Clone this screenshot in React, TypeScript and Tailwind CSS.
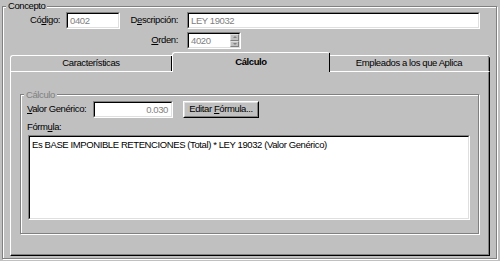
import type { ReactNode } from "react"

const etched = "border border-[#808080] shadow-[inset_1px_1px_0_#fff,1px_1px_0_#fff]"

function Sunken({ className = "", children }: { className?: string; children?: ReactNode }) {
  return (
    <div className={`border border-t-[#808080] border-l-[#808080] border-b-white border-r-white ${className}`}>
      <div className="relative h-full w-full border border-t-black border-l-black border-b-[#dfdfdf] border-r-[#dfdfdf] bg-white">
        {children}
      </div>
    </div>
  )
}

function Raised({ className = "", children }: { className?: string; children?: ReactNode }) {
  return (
    <div className={`border border-t-white border-l-white border-b-black border-r-black ${className}`}>
      <div className="flex h-full w-full items-center justify-center border border-t-[#dfdfdf] border-l-[#dfdfdf] border-b-[#808080] border-r-[#808080] bg-[#c0c0c0]">
        {children}
      </div>
    </div>
  )
}

function SpinButton({ up }: { up?: boolean }) {
  return (
    <div className="flex h-1/2 w-full items-center justify-center border border-t-[#dfdfdf] border-l-[#dfdfdf] border-b-[#808080] border-r-[#808080] bg-[#c0c0c0]">
      {up ? (
        <span className="block h-0 w-0 border-x-[2px] border-b-[2px] border-x-transparent border-b-[#808080]" />
      ) : (
        <span className="block h-0 w-0 border-x-[2px] border-t-[2px] border-x-transparent border-t-[#808080]" />
      )}
    </div>
  )
}

export default function App() {
  return (
    <div className="h-[261px] w-[500px] overflow-hidden whitespace-nowrap bg-[#c0c0c0] font-['Liberation_Sans',Arial,sans-serif] text-[9.5px] tracking-[-0.4px] text-black">
      {/* Concepto */}
      <fieldset className={`ml-[2px] h-[259px] w-[495px] ${etched}`}>
        <legend className="ml-[3px] bg-[#c0c0c0] px-[2px] leading-[12px]">Concepto</legend>

        <div className="flex h-[17px] items-center">
          <span className="w-[57px] text-right">Có<u>d</u>igo:</span>
          <Sunken className="ml-[6px] h-[17px] w-[54px]">
            <span className="pl-[2px] leading-[13px] text-[#808080]">0402</span>
          </Sunken>
          <span className="w-[58px] text-right">D<u>e</u>scripción:</span>
          <Sunken className="ml-[9px] h-[17px] w-[293px]">
            <span className="pl-[2px] leading-[13px] text-[#808080]">LEY 19032</span>
          </Sunken>
        </div>

        <div className="mt-[3px] flex h-[17px] items-center">
          <span className="w-[175px] text-right"><u>O</u>rden:</span>
          <Sunken className="ml-[9px] h-[17px] w-[54px]">
            <span className="pl-[2px] leading-[13px] text-[#808080]">4020</span>
            <div className="absolute right-0 top-0 flex h-full w-[9px] flex-col">
              <SpinButton up />
              <SpinButton />
            </div>
          </Sunken>
        </div>

        {/* Tabs */}
        <div className="ml-[7px] mt-[3px] flex h-[19px] items-end">
          <div className="flex h-[16px] w-[162px] items-center justify-center rounded-tl-[3px] border-l border-t border-white">
            <div className="flex h-full w-full items-center justify-center border-r border-black">Características</div>
          </div>
          <div className="relative z-10 -mb-[1px] flex h-[20px] w-[158px] items-center justify-center rounded-t-[3px] border-l border-t border-white bg-[#c0c0c0]">
            <div className="flex h-full w-full items-center justify-center border-r border-black font-bold">Cálculo</div>
          </div>
          <div className="flex h-[16px] w-[160px] rounded-tr-[3px] border-t border-white">
            <div className="flex h-full w-full items-center justify-center rounded-tr-[3px] border-r border-black">
              <div className="flex h-full w-full items-center justify-center border-r border-[#808080]">Empleados a los que Aplica</div>
            </div>
          </div>
        </div>

        {/* Panel */}
        <div className="ml-[7px] h-[185px] w-[480px] border border-t-white border-l-white border-b-black border-r-black">
          <div className="h-full w-full border-b border-r border-[#808080] pt-[17px]">
            <fieldset className={`ml-[9px] h-[145px] w-[459px] ${etched}`}>
              <legend className="ml-[3px] bg-[#c0c0c0] px-[2px] leading-[11px] text-[#808080]">Cálculo</legend>

              <div className="ml-[6px] mt-[1px] flex h-[17px] items-center">
                <span className="w-[66px]"><u>V</u>alor Genérico:</span>
                <Sunken className="h-[17px] w-[80px]">
                  <div className="pr-[3px] text-right leading-[14px] text-[#808080]">0.030</div>
                </Sunken>
                <Raised className="ml-[10px] h-[17px] w-[76px]">
                  <span>Editar <u>F</u>órmula...</span>
                </Raised>
              </div>

              <div className="ml-[6px] mt-[3px] leading-[12px]">Fórm<u>u</u>la:</div>

              <Sunken className="ml-[7px] mt-[2px] h-[85px] w-[442px]">
                <div className="pl-[2px] pt-[2px] leading-[12px]">
                  Es BASE IMPONIBLE RETENCIONES (Total) * LEY 19032 (Valor Genérico)
                </div>
              </Sunken>
            </fieldset>
          </div>
        </div>
      </fieldset>
    </div>
  )
}
